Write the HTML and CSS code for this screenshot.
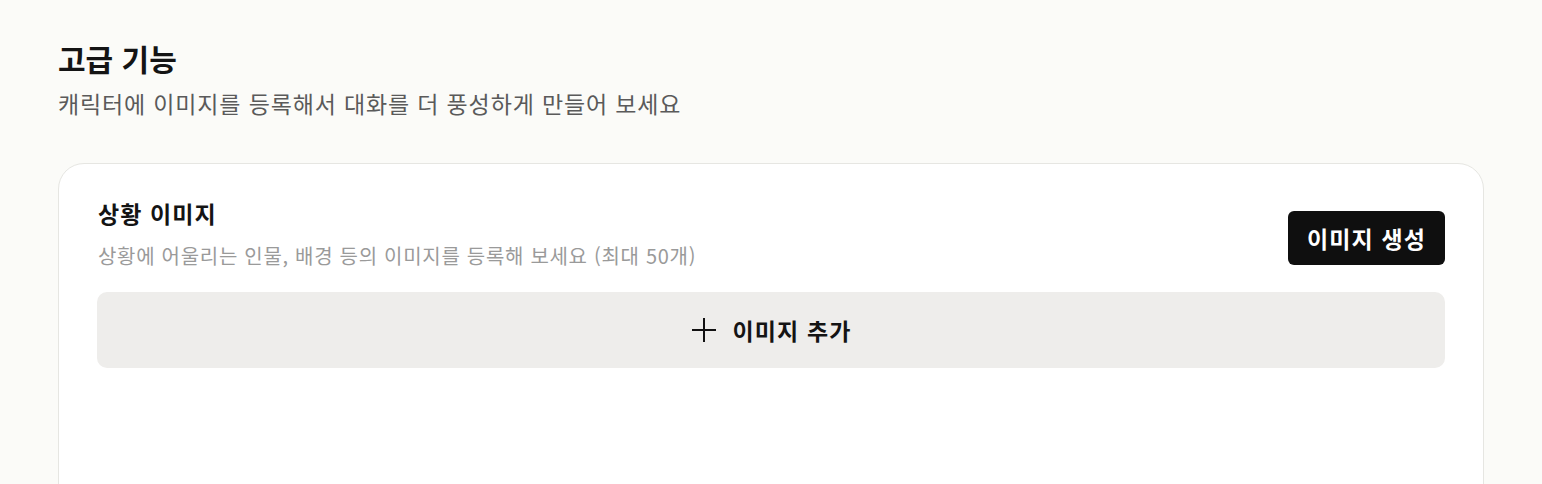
FILE: index.html
```html
<!DOCTYPE html>
<html lang="ko">
<head>
<meta charset="utf-8">
<link rel="stylesheet" href="styles.css">
</head>
<body>
<main class="page">
  <header class="section-head">
    <h1 class="section-title">고급 기능</h1>
    <p class="section-desc">캐릭터에 이미지를 등록해서 대화를 더 풍성하게 만들어 보세요</p>
  </header>
  <section class="card">
    <div class="card-head">
      <div class="card-text">
        <h2 class="card-title">상황 이미지</h2>
        <p class="card-desc">상황에 어울리는 인물, 배경 등의 이미지를 등록해 보세요 (최대 50개)</p>
      </div>
      <button class="btn-generate" type="button">이미지 생성</button>
    </div>
    <button class="add-image" type="button">
      <svg class="plus" width="26" height="26" viewBox="0 0 26 26" aria-hidden="true">
        <path d="M13 1v24M1 13h24" stroke="#111" stroke-width="2" fill="none"/>
      </svg>
      <span>이미지 추가</span>
    </button>
  </section>
</main>
</body>
</html>
```
FILE: styles.css
```css
* { box-sizing: border-box; }
html, body { margin: 0; height: 100%; }
body {
  background: #fbfbf8;
  font-family: "Noto Sans CJK KR", "Noto Sans", sans-serif;
  color: #111;
  overflow: hidden;
}
.page {
  padding: 38px 58px 0;
}
.section-head {
  margin-bottom: 45px;
}
.section-title {
  margin: 0;
  font-size: 30px;
  font-weight: 700;
  line-height: 40px;
  color: #141414;
}
.section-desc {
  margin: 10px 0 0;
  font-size: 23px;
  letter-spacing: 0.85px;
  line-height: 30px;
  color: #5a5a5a;
}
.card {
  background: #fff;
  border: 1px solid #e6e6e2;
  border-radius: 26px;
  padding: 35px 38px 200px 38px;
}
.card-head {
  display: flex;
  align-items: center;
  justify-content: space-between;
  margin-bottom: 22px;
}
.card-text { display: flex; flex-direction: column; gap: 15px; padding-left: 1px; }
.card-title {
  margin: 0;
  font-size: 23px;
  letter-spacing: 1.1px;
  font-weight: 700;
  line-height: 28px;
  color: #141414;
}
.card-desc {
  margin: 0;
  font-size: 20px;
  letter-spacing: 0.7px;
  line-height: 28px;
  color: #9a9a9a;
}
.btn-generate {
  height: 54px;
  width: 157px;
  border: 0;
  border-radius: 6px;
  background: #0f0f0f;
  color: #fff;
  font-family: inherit;
  font-size: 23px;
  letter-spacing: 1.1px;
  font-weight: 700;
  margin-top: 7px;
}
.add-image {
  width: 100%;
  height: 76px;
  border: 0;
  border-radius: 10px;
  background: #eeedeb;
  display: flex;
  align-items: center;
  justify-content: center;
  gap: 16px;
  font-family: inherit;
  font-size: 23px;
  letter-spacing: 1.1px;
  font-weight: 700;
  color: #141414;
}
.plus { display: block; }
```
